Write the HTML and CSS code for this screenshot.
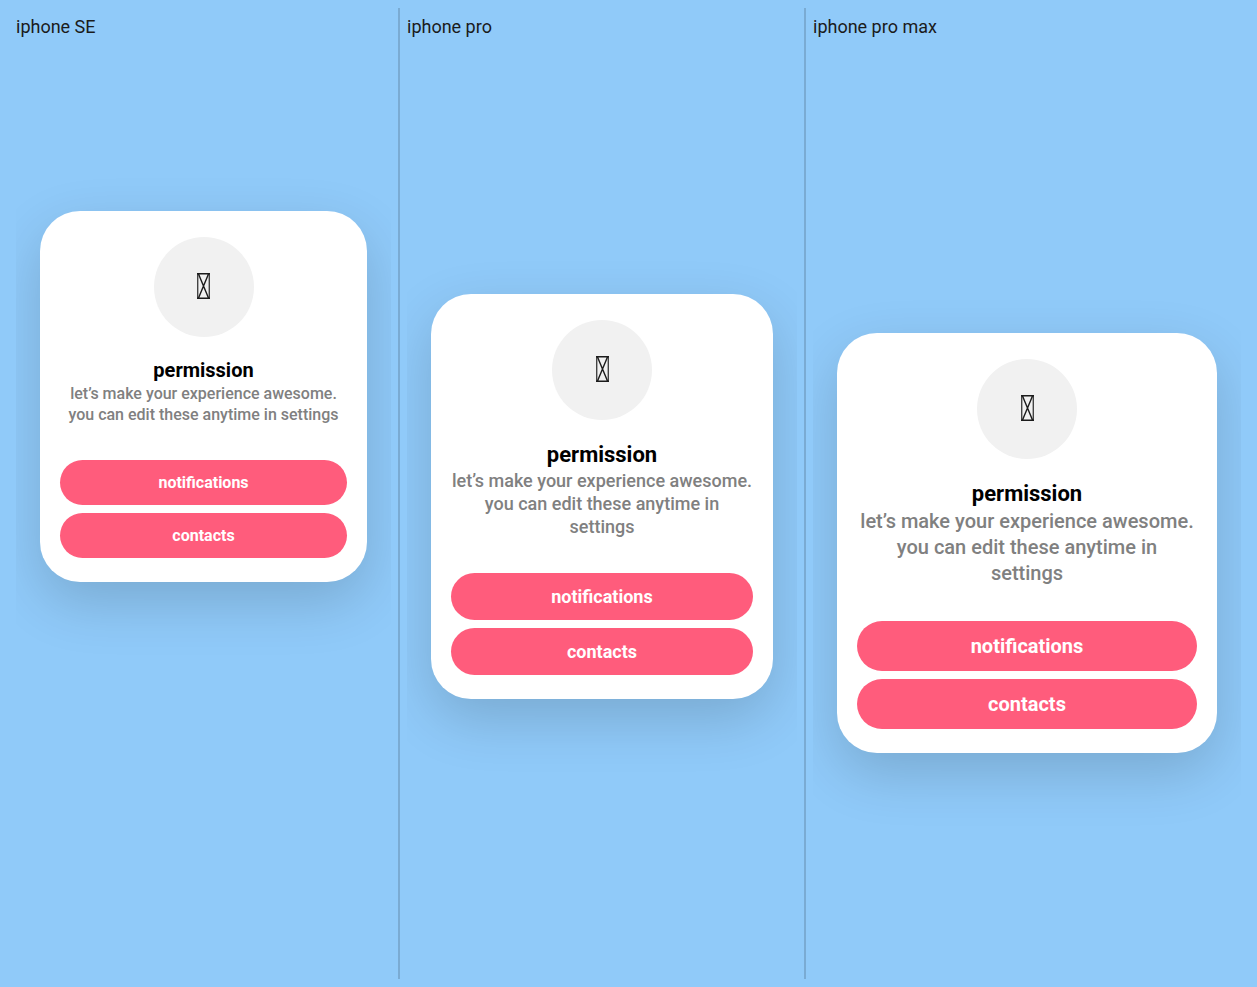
FILE: index.html
```html
<!DOCTYPE html>
<html lang="en">
<head>
<meta charset="utf-8">
<meta name="viewport" content="width=device-width, initial-scale=1">
<title>permission</title>
<link rel="stylesheet" href="styles.css">
</head>
<body>
<main class="devices">
  <section class="device device-se">
    <h2 class="device-name">iphone SE</h2>
    <div class="screen">
      <article class="card">
        <div class="badge">
          <svg class="glyph" viewBox="0 0 13 26" aria-hidden="true"><path class="glyph-side" d="M.7 0V26M12.300 0V26"/><path class="glyph-line" d="M0 .7H13M0 25.300H13M1.500 1L11.500 25M11.500 1L1.500 25"/></svg>
        </div>
        <h3 class="title">permission</h3>
        <p class="text">let’s make your experience awesome.<br>you can edit these anytime in settings</p>
        <div class="actions">
          <button class="button" type="button">notifications</button>
          <button class="button" type="button">contacts</button>
        </div>
      </article>
    </div>
  </section>
  <section class="device device-pro">
    <h2 class="device-name">iphone pro</h2>
    <div class="screen">
      <article class="card">
        <div class="badge">
          <svg class="glyph" viewBox="0 0 13 26" aria-hidden="true"><path class="glyph-side" d="M.7 0V26M12.300 0V26"/><path class="glyph-line" d="M0 .7H13M0 25.300H13M1.500 1L11.500 25M11.500 1L1.500 25"/></svg>
        </div>
        <h3 class="title">permission</h3>
        <p class="text">let’s make your experience awesome.<br>you can edit these anytime in<br>settings</p>
        <div class="actions">
          <button class="button" type="button">notifications</button>
          <button class="button" type="button">contacts</button>
        </div>
      </article>
    </div>
  </section>
  <section class="device device-max">
    <h2 class="device-name">iphone pro max</h2>
    <div class="screen">
      <article class="card">
        <div class="badge">
          <svg class="glyph" viewBox="0 0 13 26" aria-hidden="true"><path class="glyph-side" d="M.7 0V26M12.300 0V26"/><path class="glyph-line" d="M0 .7H13M0 25.300H13M1.500 1L11.500 25M11.500 1L1.500 25"/></svg>
        </div>
        <h3 class="title">permission</h3>
        <p class="text">let’s make your experience awesome.<br>you can edit these anytime in<br>settings</p>
        <div class="actions">
          <button class="button" type="button">notifications</button>
          <button class="button" type="button">contacts</button>
        </div>
      </article>
    </div>
  </section>
</main>
</body>
</html>
```
FILE: styles.css
```css
* {
  box-sizing: border-box;
}

body {
  margin: 0;
  background: #90caf9;
  color: #1b1b1b;
  font-family: Roboto, "Liberation Sans", sans-serif;
}

.devices {
  display: grid;
  grid-template-columns: 392fr 406fr 443fr;
  min-height: 100vh;
  padding: 8px;
}

.device {
  display: flex;
  flex-direction: column;
  padding: 8px 7px 0;
  border-right: 2px solid #7aabd3;
}

.device:first-child {
  padding-left: 8px;
}

.device:last-child {
  padding-right: 8px;
  border-right: 0;
}

.device-name {
  margin: 0;
  font-size: 18px;
  font-weight: 400;
  line-height: 22px;
}

.screen {
  flex: 1;
  padding: var(--card-top) 24px 80px;
  overflow: hidden;
}

.device-se {
  --card-top: 173px;
  --title: 20px;
  --title-line: 26px;
  --text: 16px;
  --text-line: 21px;
  --button: 45px;
}

.device-pro {
  --card-top: 256px;
  --title: 22px;
  --title-line: 29px;
  --text: 18px;
  --text-line: 23px;
  --button: 47px;
}

.device-max {
  --card-top: 295px;
  --title: 22px;
  --title-line: 29px;
  --text: 20px;
  --text-line: 26px;
  --button: 50px;
}

.card {
  display: flex;
  flex-direction: column;
  padding: 26px 20px 24px;
  border-radius: 40px;
  background: #fff;
  box-shadow: 0 20px 56px rgba(0, 0, 0, 0.16);
  text-align: center;
}

.badge {
  display: grid;
  place-items: center;
  align-self: center;
  width: 100px;
  height: 100px;
  margin-bottom: 20px;
  padding-bottom: 2px;
  border-radius: 50%;
  background: #f1f1f1;
}

.glyph {
  width: 13px;
  height: 26px;
  fill: none;
}

.glyph-side {
  stroke: #444;
  stroke-width: 1.4;
}

.glyph-line {
  stroke: #1b1b1b;
  stroke-width: 1.4;
}

.title {
  margin: 0;
  color: #000;
  font-size: var(--title);
  font-weight: 700;
  line-height: var(--title-line);
}

.text {
  margin: 0 -10px 35px;
  color: #808080;
  font-size: var(--text);
  font-weight: 500;
  line-height: var(--text-line);
}

.actions {
  display: grid;
  gap: 8px;
}

.button {
  height: var(--button);
  padding: 0 20px;
  border: 0;
  border-radius: 25px;
  background: #ff5c7c;
  color: #fff;
  font-family: inherit;
  font-size: var(--text);
  font-weight: 700;
}
```
